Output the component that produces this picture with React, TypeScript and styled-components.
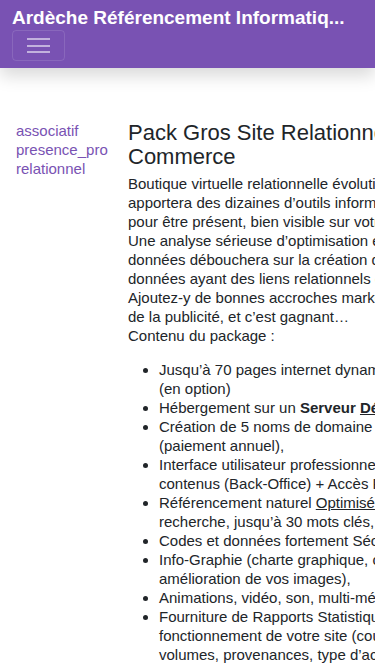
import React from 'react';
import styled, { createGlobalStyle } from 'styled-components';

const GlobalStyle = createGlobalStyle`
    html, body {
        margin: 0;
        padding: 0;
        overflow-x: hidden;
        background: #ffffff;
    }
    body {
        font-family: 'Liberation Sans', Arial, Helvetica, sans-serif;
        color: #212529;
    }
`

const tags = ['associatif', 'presence_pro', 'relationnel']

const App: React.FC = () => {
    return (
        <>
            <GlobalStyle />
            <Header>
                <Brand>Ardèche Référencement Informatiq...</Brand>
                <Toggler aria-label="menu">
                    <TogglerBar />
                    <TogglerBar />
                    <TogglerBar />
                </Toggler>
            </Header>
            <Page>
                <Sidebar>
                    {tags.map((t) => (
                        <TagLink key={t} href="#">{t}</TagLink>
                    ))}
                </Sidebar>
                <Main>
                    <Title>Pack Gros Site Relationnel<br />Commerce</Title>
                    <Text>
                        Boutique virtuelle relationnelle évolutive, ce pack<br />
                        apportera des dizaines d’outils informatiques<br />
                        pour être présent, bien visible sur votre marché.<br />
                        Une analyse sérieuse d’optimisation et de<br />
                        données débouchera sur la création d’une base de<br />
                        données ayant des liens relationnels entre elles.<br />
                        Ajoutez-y de bonnes accroches marketing, un peu<br />
                        de la publicité, et c’est gagnant…<br />
                        Contenu du package :
                    </Text>
                    <List>
                        <Item>Jusqu’à 70 pages internet dynamiques<br />(en option)</Item>
                        <Item>Hébergement sur un <strong>Serveur <u>Dédié</u></strong>,</Item>
                        <Item>Création de 5 noms de domaine<br />(paiement annuel),</Item>
                        <Item>Interface utilisateur professionnelle de<br />contenus (Back-Office) + Accès FTP,</Item>
                        <Item>Référencement naturel <u>Optimisé</u> pour les<br />recherche, jusqu’à 30 mots clés,</Item>
                        <Item>Codes et données fortement Sécurisés,</Item>
                        <Item>Info-Graphie (charte graphique, création<br />amélioration de vos images),</Item>
                        <Item>Animations, vidéo, son, multi-média,</Item>
                        <Item>Fourniture de Rapports Statistiques sur le<br />fonctionnement de votre site (courbes,<br />volumes, provenances, type d’accès…),</Item>
                        <Item>Informations lisibles du site dans un Rapport</Item>
                    </List>
                </Main>
            </Page>
        </>
    )
}
export default App

const Header = styled.header`
    background-color: #7952b3;
    padding: 6px 12px 7px;
    box-shadow: 0 8px 16px rgba(0, 0, 0, 0.15);
    position: relative;
    z-index: 2;
`
const Brand = styled.div`
    color: #ffffff;
    font-weight: 700;
    font-size: 19px;
    line-height: 24px;
    white-space: nowrap;
    overflow: hidden;
`
const Toggler = styled.button`
    display: flex;
    flex-direction: column;
    justify-content: center;
    align-items: center;
    gap: 4.5px;
    width: 53px;
    height: 31px;
    padding: 0;
    background: transparent;
    border: 1px solid rgba(255, 255, 255, 0.12);
    border-radius: 4px;
`
const TogglerBar = styled.span`
    display: block;
    width: 23px;
    height: 2px;
    background: rgba(255, 255, 255, 0.55);
`
const Page = styled.div`
    display: flex;
    gap: 16px;
    padding: 53px 0 0 16px;
    width: 520px;
`
const Sidebar = styled.nav`
    flex: 0 0 96px;
    display: flex;
    flex-direction: column;
`
const TagLink = styled.a`
    color: #7952b3;
    text-decoration: none;
    font-size: 15px;
    line-height: 19px;
`
const Main = styled.main`
    flex: 0 0 360px;
`
const Title = styled.h1`
    font-size: 22px;
    font-weight: 400;
    line-height: 24px;
    margin: 0 0 5px;
    white-space: nowrap;
`
const Text = styled.p`
    font-size: 15px;
    line-height: 19px;
    margin: 0;
    white-space: nowrap;
`
const List = styled.ul`
    margin: 15px 0 0;
    padding-left: 31px;
    font-size: 15px;
    line-height: 19px;
    white-space: nowrap;
`
const Item = styled.li`
    u {
        text-decoration: underline;
    }
`
